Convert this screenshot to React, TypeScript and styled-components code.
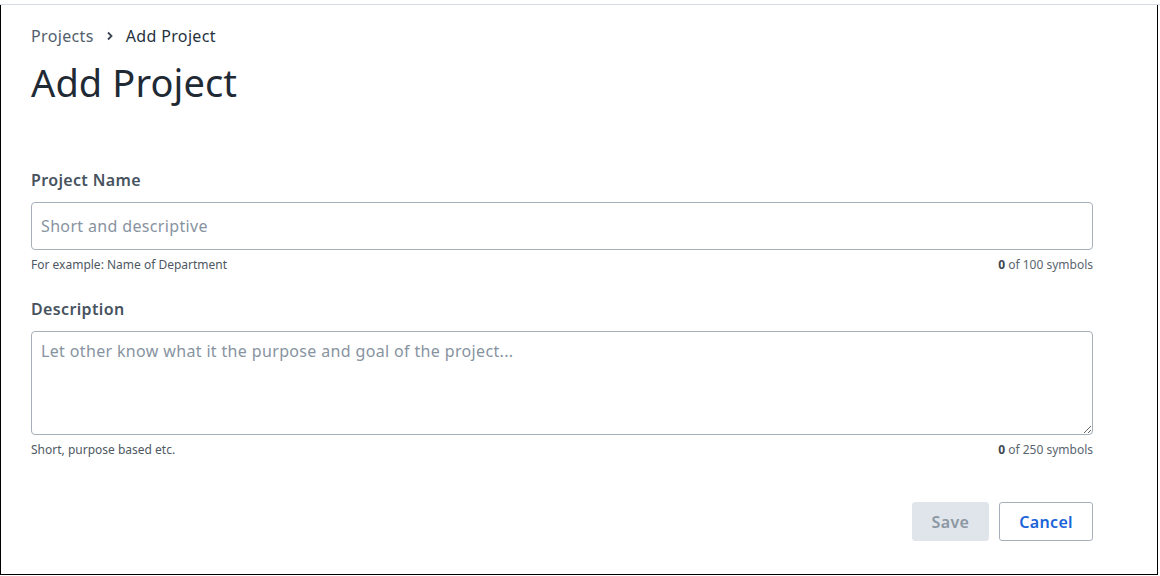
import React from 'react'
import styled, { createGlobalStyle } from 'styled-components'

const GlobalStyle = createGlobalStyle`
  html, body {
    margin: 0;
    padding: 0;
    background: #fff;
    font-family: 'Noto Sans', 'Open Sans', sans-serif;
  }
  * {
    box-sizing: border-box;
  }
`

const TopRule = styled.div`
  height: 5px;
  border-bottom: 1px solid #d5dbe1;
`

const Frame = styled.main`
  width: 1158px;
  height: 570px;
  border: 1px solid #000;
  border-top: none;
  padding: 19px 64px 0 30px;
  display: flex;
  flex-direction: column;
  color: #26323d;
  letter-spacing: 0.35px;
`

const Breadcrumbs = styled.nav`
  display: flex;
  align-items: center;
  gap: 12px;
  font-size: 16px;
  line-height: 24px;
`

const Crumb = styled.span<{ current?: boolean }>`
  color: ${({ current }) => (current ? '#26323d' : '#52606d')};
`

const Title = styled.h1`
  margin: 9px 0 0;
  font-size: 38px;
  font-weight: 400;
  line-height: 50px;
  letter-spacing: 0.1px;
  color: #1f2a35;
`

const Form = styled.form`
  margin-top: 61px;
  display: flex;
  flex-direction: column;
`

const Field = styled.div`
  display: flex;
  flex-direction: column;
  margin-bottom: 23px;
`

const Label = styled.label`
  font-size: 16px;
  font-weight: 600;
  line-height: 24px;
  color: #47535f;
  margin-bottom: 10px;
`

const inputBase = `
  width: 100%;
  border: 1px solid #a6b0ba;
  border-radius: 4px;
  padding: 0 9px;
  font-family: inherit;
  font-size: 16px;
  letter-spacing: 0.35px;
  color: #26323d;
  background: #fff;
  outline: none;
  &::placeholder {
    color: #87939f;
  }
`

const TextInput = styled.input`
  ${inputBase}
  height: 48px;
`

const TextArea = styled.textarea`
  ${inputBase}
  height: 104px;
  padding-top: 7px;
  line-height: 24px;
  resize: vertical;
  display: block;
`

const Hint = styled.div`
  display: flex;
  justify-content: space-between;
  margin-top: 6px;
  font-size: 12px;
  line-height: 18px;
  letter-spacing: 0;
  color: #4e5862;
`

const Count = styled.span`
  color: #5a6570;
  b {
    color: #3b4550;
    font-weight: 700;
  }
`

const Actions = styled.div`
  display: flex;
  justify-content: flex-end;
  gap: 10px;
  margin-top: 20px;
`

const Button = styled.button<{ variant: 'primary' | 'secondary' }>`
  height: 39px;
  padding: 0 19px;
  border-radius: 3px;
  font-family: inherit;
  font-size: 16px;
  font-weight: 600;
  letter-spacing: 0.35px;
  border: 1px solid ${({ variant }) => (variant === 'primary' ? '#dfe5ea' : '#a6b0ba')};
  background: ${({ variant }) => (variant === 'primary' ? '#dfe5ea' : '#fff')};
  color: ${({ variant }) => (variant === 'primary' ? '#8b97a2' : '#1b64d8')};
  cursor: ${({ disabled }) => (disabled ? 'default' : 'pointer')};
`

const Chevron = () => (
  <svg width="8" height="10" viewBox="0 0 8 10" fill="none">
    <path d="M2 1.5L5.5 5L2 8.5" stroke="#3a4550" strokeWidth="1.8" />
  </svg>
)

export default function App() {
  return (
    <>
      <GlobalStyle />
      <TopRule />
      <Frame>
        <Breadcrumbs>
          <Crumb>Projects</Crumb>
          <Chevron />
          <Crumb current>Add Project</Crumb>
        </Breadcrumbs>
        <Title>Add Project</Title>
        <Form onSubmit={(e) => e.preventDefault()}>
          <Field>
            <Label htmlFor="name">Project Name</Label>
            <TextInput id="name" placeholder="Short and descriptive" />
            <Hint>
              <span>For example: Name of Department</span>
              <Count>
                <b>0</b> of 100 symbols
              </Count>
            </Hint>
          </Field>
          <Field>
            <Label htmlFor="desc">Description</Label>
            <TextArea
              id="desc"
              placeholder="Let other know what it the purpose and goal of the project..."
            />
            <Hint>
              <span>Short, purpose based etc.</span>
              <Count>
                <b>0</b> of 250 symbols
              </Count>
            </Hint>
          </Field>
          <Actions>
            <Button variant="primary" disabled>
              Save
            </Button>
            <Button variant="secondary" type="button">
              Cancel
            </Button>
          </Actions>
        </Form>
      </Frame>
    </>
  )
}
